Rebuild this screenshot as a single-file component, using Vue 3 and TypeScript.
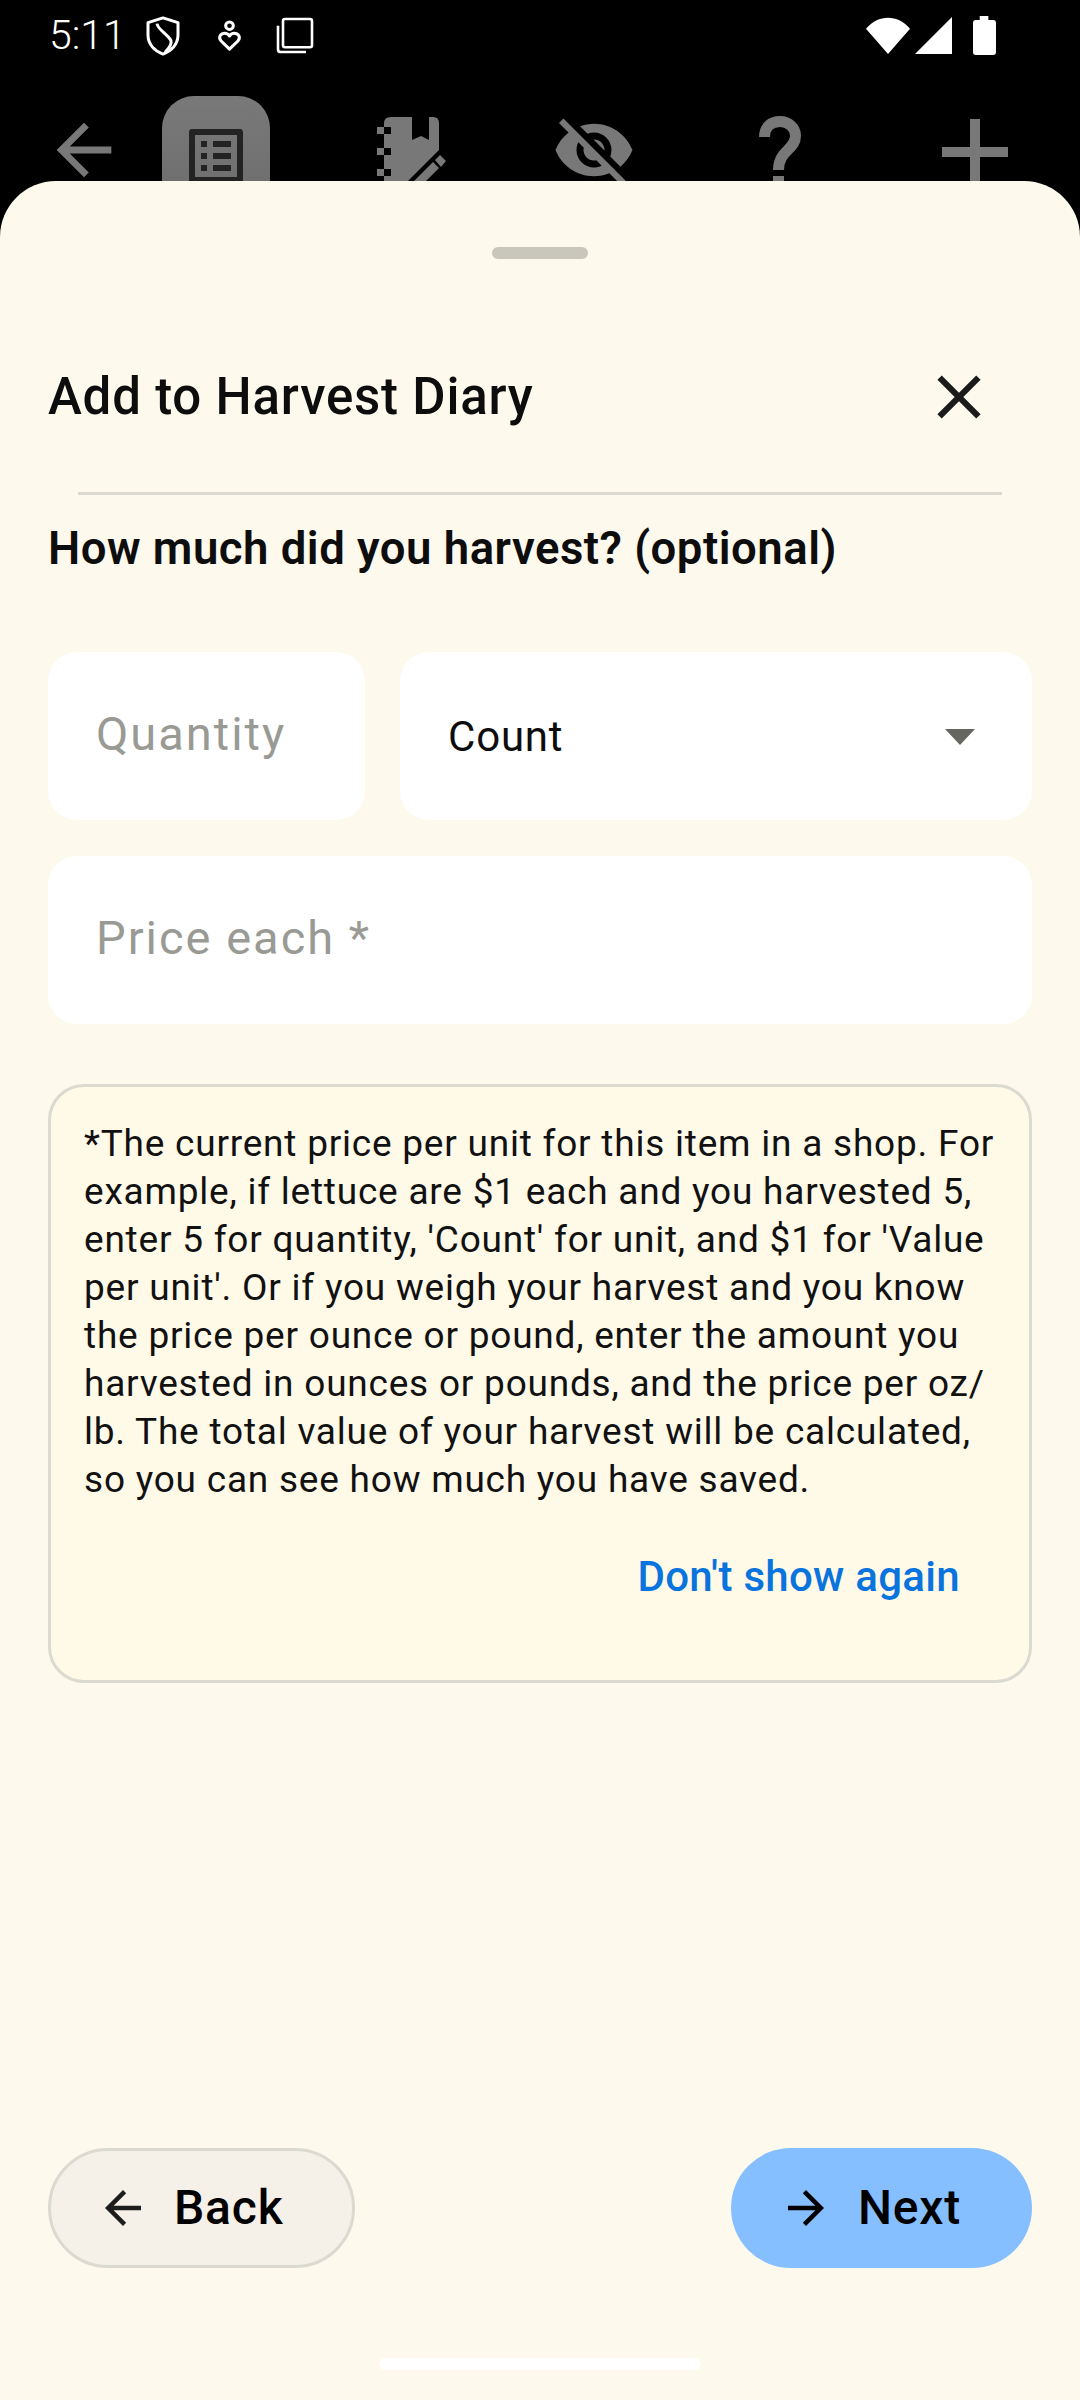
<script setup lang="ts">
const lines: string[] = [
  "*The current price per unit for this item in a shop. For",
  "example, if lettuce are $1 each and you harvested 5,",
  "enter 5 for quantity, 'Count' for unit, and $1 for 'Value",
  "per unit'. Or if you weigh your harvest and you know",
  "the price per ounce or pound, enter the amount you",
  "harvested in ounces or pounds, and the price per oz/",
  "lb. The total value of your harvest will be calculated,",
  "so you can see how much you have saved.",
];
</script>

<template>
  <div class="screen">
    <header class="top">
      <div class="status">
        <span class="time">5:11</span>
        <svg class="st shield" width="34" height="40" viewBox="0 0 34 42" fill="none" stroke="#fff" stroke-width="3" preserveAspectRatio="none">
          <path d="M17 2 L32 7 V20 C32 30 25 37 17 40 C9 37 2 30 2 20 V7 Z" stroke-linejoin="round" />
          <path d="M11 8 C12 15 22 19 25 26 C26 30 23 34 19 38" />
        </svg>
        <svg class="st care" width="23" height="32" viewBox="0 0 24 34" fill="none" stroke="#fff" stroke-width="3.2" preserveAspectRatio="none">
          <circle cx="12" cy="6" r="4" />
          <path d="M12 31 L3 22 C0 18 3 14 7 14 C9 14 11 15 12 17 C13 15 15 14 17 14 C21 14 24 18 21 22 Z" stroke-linejoin="round" />
        </svg>
        <svg class="st copy" width="38" height="37" viewBox="0 0 38 38" fill="none" stroke="#fff" stroke-width="2.6" preserveAspectRatio="none">
          <rect x="7" y="2" width="29" height="29" rx="2" />
          <path d="M2 9 V33 C2 35 3 36 5 36 H30" />
        </svg>
        <span class="spring"></span>
        <svg class="st wifi" width="44" height="37" viewBox="0 0 44 38" preserveAspectRatio="none"><path d="M0 12 C12 -3 32 -3 44 12 L22 38 Z" fill="#fff" /></svg>
        <svg class="st signal" width="37" height="37" viewBox="0 0 37 37"><path d="M37 0 V37 H0 Z" fill="#fff" /></svg>
        <svg class="st battery" width="23" height="39" viewBox="0 0 24 39" preserveAspectRatio="none"><path d="M7 0 H16 V4 H21 C23 4 24 5 24 7 V36 C24 38 23 39 21 39 H3 C1 39 0 38 0 36 V7 C0 5 1 4 3 4 H7 Z" fill="#fff" /></svg>
      </div>
      <div class="appbar">
        <svg class="ic a-back" width="82" height="82" viewBox="0 0 24 24"><path class="g" d="M20 11H7.83l5.59-5.59L12 4l-8 8 8 8 1.41-1.41L7.83 13H20v-2z" /></svg>
        <div class="active">
          <svg width="72" height="72" viewBox="0 0 24 24"><path fill="#232323" d="M19 5v14H5V5h14m1.1-2H3.9c-.5 0-.9.4-.9.9v16.2c0 .4.4.9.9.9h16.2c.4 0 .9-.5.9-.9V3.9c0-.5-.5-.9-.9-.9zM11 7h6v2h-6V7zm0 4h6v2h-6v-2zm0 4h6v2h-6v-2zM7 7h2v2H7V7zm0 4h2v2H7v-2zm0 4h2v2H7v-2z" /></svg>
        </div>
        <svg class="ic a-note" width="80" height="90" viewBox="370 110 80 90">
          <path class="g" d="M391 117 H412 V140 L421 136 L429 140 V117 H433 Q439 117 439 123 V150 L393 196 H384 V176 H391 V169 H384 V155 H391 V148 H384 V134 H391 V127 H384 V123 Q384 117 391 117 Z" />
          <path class="g" d="M377 127 H384 V134 H377 Z M377 148 H384 V155 H377 Z M377 169 H384 V176 H377 Z" />
          <path class="g" d="M435 160 L440 155 L446 161 L441 167 Z M433 162 L439 168 L415 192 L409 186 Z" />
        </svg>
        <svg class="ic a-eye" width="84" height="84" viewBox="0 0 24 24"><path class="g" d="M12 7c2.76 0 5 2.24 5 5 0 .65-.13 1.26-.36 1.83l2.92 2.92c1.51-1.26 2.7-2.89 3.43-4.75-1.73-4.39-6-7.5-11-7.5-1.4 0-2.74.25-3.98.7l2.16 2.16C10.74 7.13 11.35 7 12 7zM2 4.27l2.28 2.28.46.46C3.08 8.3 1.78 10.02 1 12c1.73 4.39 6 7.5 11 7.5 1.55 0 3.03-.3 4.38-.84l.42.42L19.73 22 21 20.73 3.27 3 2 4.27zM7.53 9.8l1.55 1.55c-.05.21-.08.43-.08.65 0 1.66 1.34 3 3 3 .22 0 .44-.03.65-.08l1.55 1.55c-.67.33-1.41.53-2.2.53-2.76 0-5-2.24-5-5 0-.79.2-1.53.53-2.2zm4.31-.78l3.15 3.15.02-.16c0-1.66-1.34-3-3-3l-.17.01z" /></svg>
        <svg class="ic a-help" width="42" height="70" viewBox="0 0 42 70" fill="none">
          <path d="M5.5 21 C5.5 11 12 5.5 21 5.5 C30 5.5 36.5 12 36.5 20 C36.5 34 19.5 34 19.5 54" stroke="#787878" stroke-width="11" />
          <rect x="14" y="60" width="11" height="10" fill="#787878" />
        </svg>
        <svg class="ic a-plus" width="66" height="66" viewBox="0 0 66 66"><path class="g" d="M28 0 H38 V28 H66 V38 H38 V66 H28 V38 H0 V28 H28 Z" /></svg>
      </div>
    </header>

    <main class="sheet">
      <div class="handle"></div>
      <div class="title-row">
        <h1 class="title">Add to Harvest Diary</h1>
        <svg class="close" width="74" height="74" viewBox="0 0 24 24"><path fill="#1b1b1b" d="M19 6.41 17.59 5 12 10.59 6.41 5 5 6.41 10.59 12 5 17.59 6.41 19 12 13.41 17.59 19 19 17.59 13.41 12z" /></svg>
      </div>
      <div class="divider"></div>
      <h2 class="question">How much did you harvest? (optional)</h2>

      <div class="row">
        <div class="field qty"><span class="ph">Quantity</span></div>
        <div class="field unit">
          <span class="val">Count</span>
          <span class="caret"></span>
        </div>
      </div>
      <div class="field price"><span class="ph">Price each *</span></div>

      <section class="info">
        <p v-for="l in lines" :key="l" class="line">{{ l }}</p>
        <div class="action">Don't show again</div>
      </section>

      <div class="spacer"></div>

      <div class="buttons">
        <div class="btn back">
          <svg width="54" height="54" viewBox="0 0 24 24"><path fill="#1d1d1d" d="M20 11H7.83l5.59-5.59L12 4l-8 8 8 8 1.41-1.41L7.83 13H20v-2z" /></svg>
          <span>Back</span>
        </div>
        <div class="btn next">
          <svg width="54" height="54" viewBox="0 0 24 24"><path fill="#000" d="M4 11h12.17l-5.59-5.59L12 4l8 8-8 8-1.41-1.41L16.17 13H4v-2z" /></svg>
          <span>Next</span>
        </div>
      </div>
      <div class="home"></div>
    </main>
  </div>
</template>

<style>
html, body { margin: 0; background: #000; }
</style>

<style scoped>
.screen {
  width: 1080px;
  height: 2400px;
  display: flex;
  flex-direction: column;
  background: #000;
  font-family: Roboto, "Liberation Sans", sans-serif;
  overflow: hidden;
}
.top { height: 181px; flex: none; overflow: hidden; }
.status {
  height: 72px;
  display: flex;
  align-items: flex-start;
  padding: 0 84px 0 50px;
  box-sizing: border-box;
}
.time { color: #fff; font-size: 41px; font-weight: 300; line-height: 44px; margin: 13px 1px 0 -1px; width: 96px; }
.st { flex: none; }
.shield { margin-top: 16px; }
.care { margin: 20px 0 0 38px; }
.copy { margin: 17px 0 0 35px; }
.spring { flex: 1; }
.wifi { margin-top: 17px; }
.signal { margin: 17px 0 0 5px; }
.battery { margin: 16px 0 0 21px; }

.appbar { height: 109px; position: relative; }
.g { fill: #787878; }
.ic { position: absolute; }
.a-back { left: 43px; top: 37px; }
.a-note { left: 370px; top: 38px; }
.a-eye { left: 552px; top: 36px; }
.a-help { left: 759px; top: 44px; }
.a-plus { left: 942px; top: 47px; }
.active {
  position: absolute;
  left: 162px;
  top: 24px;
  width: 108px;
  height: 120px;
  border-radius: 32px;
  background: linear-gradient(#797979, #6c6c6c);
  display: flex;
  justify-content: center;
  padding-top: 24px;
  box-sizing: border-box;
}

.sheet {
  flex: 1;
  display: flex;
  flex-direction: column;
  background: #fef9ed;
  border-radius: 56px 56px 0 0;
  padding: 66px 48px 30px;
  box-sizing: border-box;
  min-height: 0;
}
.handle { width: 96px; height: 12px; border-radius: 6px; background: #c9c7bc; align-self: center; flex: none; }
.title-row { display: flex; align-items: center; justify-content: space-between; margin-top: 98px; height: 80px; padding-right: 36px; }
.title { margin: 0; font-size: 51px; font-weight: 500; line-height: 80px; color: #0d0d0d; letter-spacing: 0.8px; }
.close { flex: none; }
.divider { height: 3px; background: #dbdad0; margin: 55px 30px 0 30px; flex: none; }
.question { margin: 29px 0 0; font-size: 45.5px; font-weight: 600; line-height: 50px; color: #0d0d0d; letter-spacing: 0.5px; }
.row { display: flex; gap: 35px; margin-top: 78px; }
.field { background: #fff; border-radius: 29px; height: 168px; display: flex; align-items: center; box-sizing: border-box; padding: 0 48px; }
.qty { width: 317px; }
.unit { flex: 1; justify-content: space-between; padding-right: 57px; }
.price { margin-top: 36px; }
.ph { color: #9a9a95; font-size: 47px; letter-spacing: 2px; line-height: 56px; margin-top: -4px; }
.val { color: #0d0d0d; font-size: 42px; letter-spacing: 0.8px; }
.caret { width: 0; height: 0; margin-top: 2px; border-left: 15px solid transparent; border-right: 15px solid transparent; border-top: 16px solid #666660; }
.info {
  margin-top: 60px;
  height: 599px;
  flex: none;
  box-sizing: border-box;
  padding: 33px 33px 0;
  background: #fff9e8;
  border: 3px solid #dbdad0;
  border-radius: 36px;
}
.line { margin: 0; font-size: 37px; line-height: 48px; color: #111; letter-spacing: 0.78px; white-space: nowrap; }
.action { text-align: right; color: #0a74de; font-size: 42px; font-weight: 500; line-height: 48px; margin: 49px 36px 0 0; letter-spacing: 0.3px; }
.spacer { flex: 1; }
.buttons { display: flex; justify-content: space-between; }
.btn { height: 120px; box-sizing: border-box; border-radius: 60px; display: flex; align-items: center; font-size: 48px; line-height: 56px; font-weight: 500; letter-spacing: 0.8px; color: #000; }
.back { width: 307px; padding-left: 45px; gap: 24px; background: #f6f1e8; border: 3px solid #dbdad0; }
.next { width: 301px; padding-left: 48px; gap: 25px; background: #85bfff; }
.home { width: 322px; height: 12px; background: #fff; border-radius: 6px; align-self: center; margin-top: 90px; flex: none; }
</style>
